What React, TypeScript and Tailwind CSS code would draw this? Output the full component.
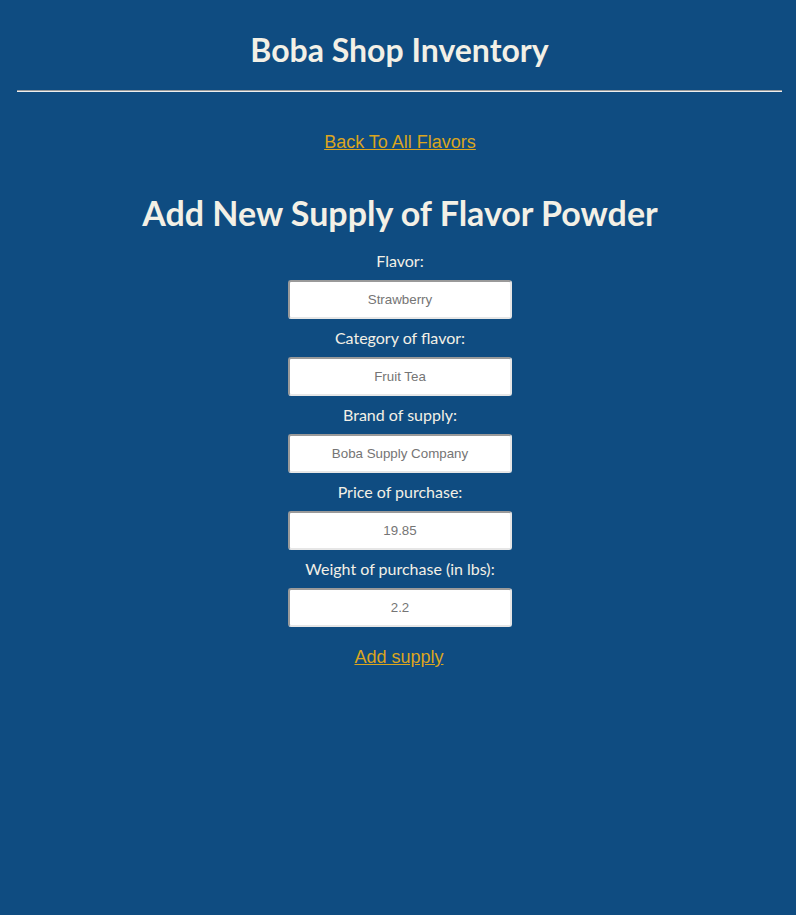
import React from "react";

const fields = [
  { label: "Flavor:", ph: "Strawberry" },
  { label: "Category of flavor:", ph: "Fruit Tea" },
  { label: "Brand of supply:", ph: "Boba Supply Company" },
  { label: "Price of purchase:", ph: "19.85" },
  { label: "Weight of purchase (in lbs):", ph: "2.2" },
];

export default function App() {
  return (
    <div className="min-h-[915px] w-full bg-[#0f4c81] text-[#f3f0e6] font-['Lato',sans-serif]">
      <div className="pl-[17px] pr-[14px] pt-[31px]">
        <h1 className="text-center text-[32px] font-bold leading-[38px]">Boba Shop Inventory</h1>
        <div className="mt-[21px] h-[2px] border-t border-t-[#9a9a9a] border-b border-b-[#eeeeee]" />
      </div>
      <div className="pl-[4px]">
        <div className="mt-[40px] flex justify-center">
          <a href="#" className="font-['Liberation_Sans',Arial,sans-serif] text-[18px] leading-[21px] text-[#daa520] underline">
            Back To All Flavors
          </a>
        </div>
        <h2 className="mt-[40px] text-center text-[34px] font-bold leading-[40px]">Add New Supply of Flavor Powder</h2>
        <form className="mt-[19px] flex flex-col items-center gap-[10px]">
          {fields.map((f) => (
            <React.Fragment key={f.label}>
              <label className="text-[16px] leading-[18px]">{f.label}</label>
              <input
                placeholder={f.ph}
                className="h-[39px] w-[224px] rounded-[3px] border-2 border-t-[#9a9a9a] border-l-[#9a9a9a] border-b-[#e6e6e6] border-r-[#e6e6e6] bg-white text-center font-['Liberation_Sans',Arial,sans-serif] text-[13.33px] text-black placeholder:text-[#757575] outline-none"
              />
            </React.Fragment>
          ))}
          <a href="#" className="mt-[10px] -ml-[2px] font-['Liberation_Sans',Arial,sans-serif] text-[18px] leading-[21px] text-[#daa520] underline">
            Add supply
          </a>
        </form>
      </div>
    </div>
  );
}
